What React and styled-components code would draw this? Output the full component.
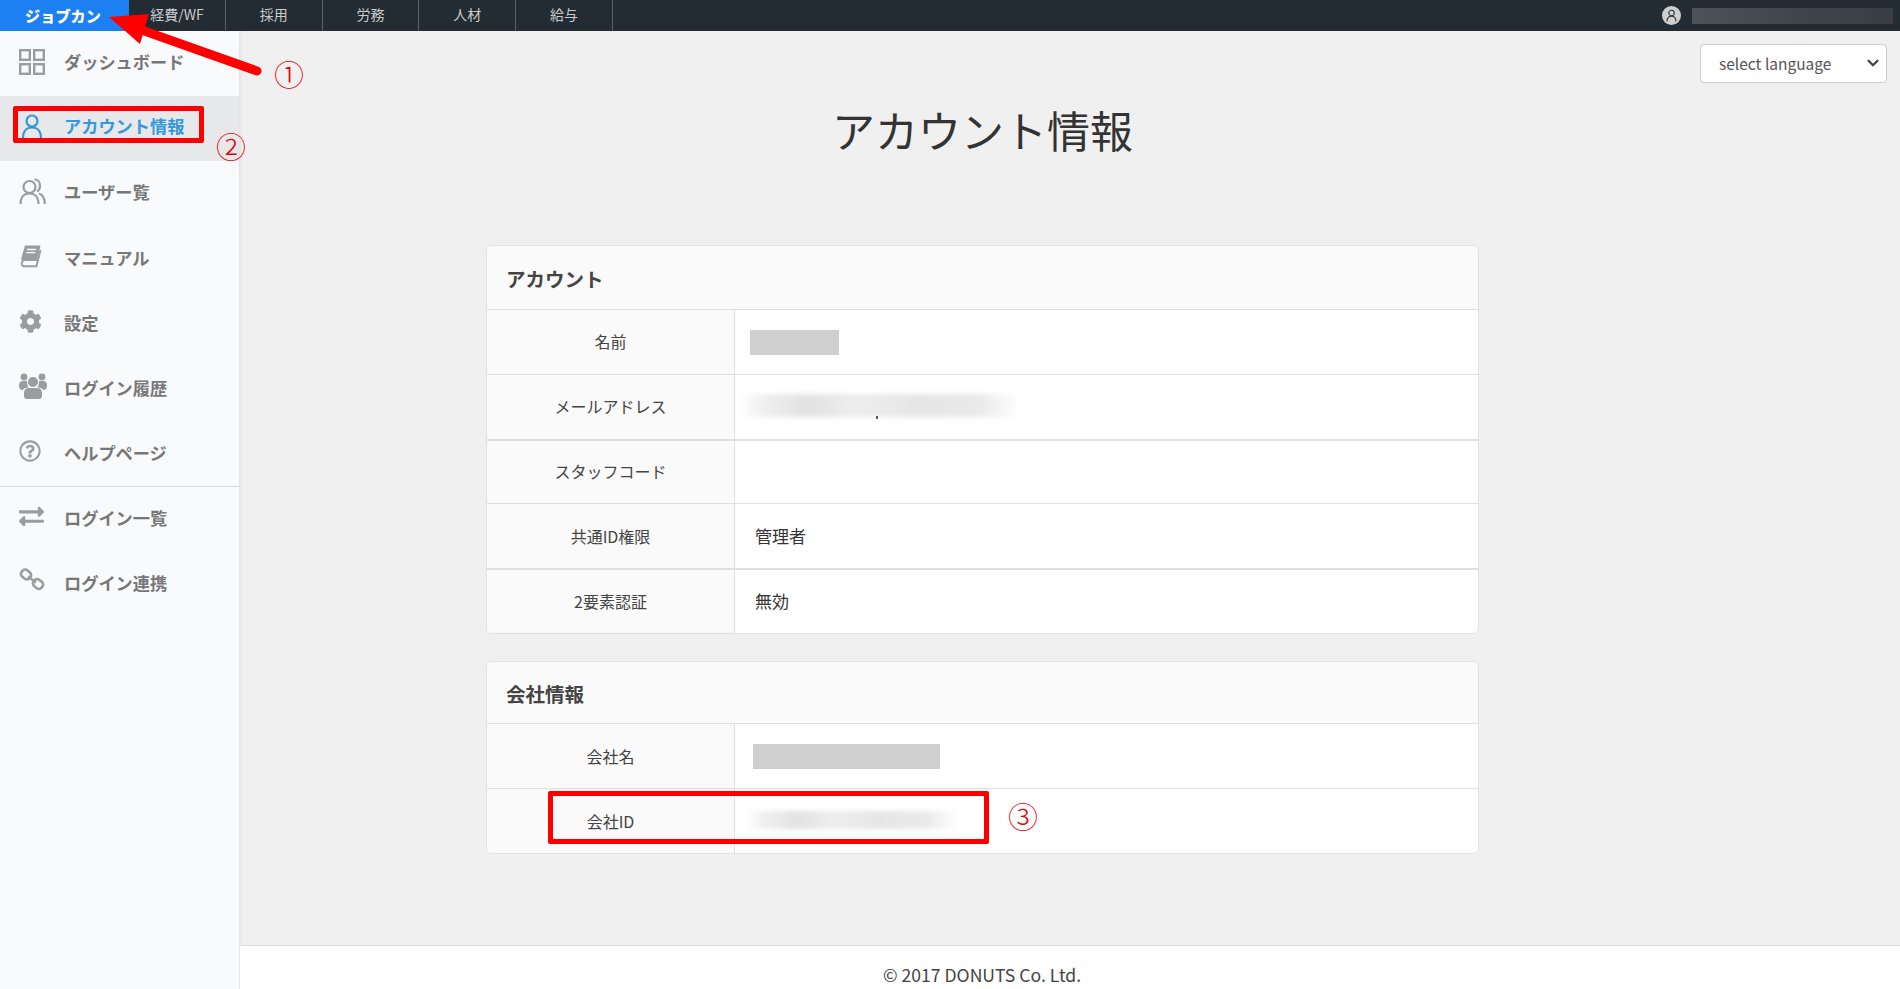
import styled, { createGlobalStyle } from "styled-components";
import { FaCog, FaRegQuestionCircle, FaExchangeAlt } from "react-icons/fa";
import { ChevronDown } from "lucide-react";

const GlobalStyle = createGlobalStyle`
  html, body, #root { margin: 0; padding: 0; height: 100%; }
  body {
    font-family: "Noto Sans CJK JP", "Noto Sans", sans-serif;
    color: #333;
    background: #f0f0f0;
    overflow: hidden;
  }
  * { box-sizing: border-box; }
`;

const Page = styled.div`
  position: relative;
  height: 989px;
  display: flex;
  flex-direction: column;
`;

const TopBar = styled.header`
  height: 31px;
  flex: none;
  display: flex;
  align-items: stretch;
  background: #232b33;
`;

const Brand = styled.div`
  width: 129px;
  display: flex;
  align-items: center;
  justify-content: center;
  padding: 0 3px 2px 0;
  background: #1c80f2;
  color: #fff;
  font-size: 15.2px;
  font-weight: 900;
`;

const TopNav = styled.nav`
  display: flex;
`;

const TopNavItem = styled.div`
  width: 96.8px;
  display: flex;
  align-items: center;
  justify-content: center;
  padding-bottom: 3px;
  border-right: 1px solid #59616a;
  color: #c9ccce;
  font-size: 14px;
`;

const UserArea = styled.div`
  margin-left: auto;
  display: flex;
  align-items: center;
  gap: 11px;
  padding-right: 7px;
`;

const Avatar = styled.div`
  width: 19px;
  height: 19px;
  border-radius: 50%;
  background: #cfcfcf;
  display: flex;
  align-items: center;
  justify-content: center;
  color: #333;
`;

const BlurredName = styled.div`
  width: 201px;
  height: 16px;
  background: linear-gradient(90deg, #4d5359 0%, #3f454b 55%, #383e44 100%);
`;

const Body = styled.div`
  flex: 1;
  display: flex;
  min-height: 0;
`;

const Sidebar = styled.aside`
  width: 240px;
  flex: none;
  background: #f9fafc;
  border-right: 1px solid #e4e4e6;
  box-shadow: 1px 0 3px rgba(0, 0, 0, 0.05);
`;

const MenuGroup = styled.div`
  border-top: ${(p) => (p.$divided ? "1px solid #d8d9dc" : "none")};
`;

const MenuItem = styled.div`
  height: 65px;
  display: flex;
  align-items: center;
  padding: 0 0 ${(p) => p.$pad ?? 4}px 19px;
  background: ${(p) => (p.$active ? "#e7e8ea" : "transparent")};
  color: ${(p) => (p.$active ? "#3498db" : "#777")};
  font-size: 17.2px;
  font-weight: 700;
`;

const MenuIcon = styled.span`
  width: 45px;
  flex: none;
  display: flex;
  align-items: center;
  margin-bottom: ${(p) => p.$lift ?? 0}px;
  color: ${(p) => (p.$active ? "#3498db" : "#9c9c9c")};
`;

const Main = styled.main`
  flex: 1;
  display: flex;
  flex-direction: column;
  min-width: 0;
`;

const LangRow = styled.div`
  display: flex;
  justify-content: flex-end;
  padding: 13px 13px 0 0;
`;

const LangWrap = styled.div`
  position: relative;
  width: 187px;
  height: 39px;

  svg {
    position: absolute;
    right: 5px;
    top: 10px;
    color: #444;
    pointer-events: none;
  }
`;

const LangSelect = styled.select`
  appearance: none;
  width: 100%;
  height: 100%;
  padding: 0 0 2px 18px;
  border: 1px solid #ccc;
  border-radius: 4px;
  background-color: #fff;
  color: #555;
  font-family: "Noto Sans CJK JP", sans-serif;
  font-size: 15.5px;
`;

const Content = styled.div`
  width: 993px;
  margin-left: 246px;
  display: flex;
  flex-direction: column;
  gap: 27px;
`;

const Title = styled.h1`
  margin: 0;
  height: 162px;
  padding-top: 15px;
  text-align: center;
  color: #333;
  font-size: 43px;
  font-weight: 400;
  line-height: 62px;
`;

const Card = styled.section`
  background: #fff;
  border: 1px solid #e2e2e2;
  border-radius: 6px;
  overflow: hidden;
`;

const CardHeader = styled.h2`
  margin: 0;
  height: ${(p) => p.$h}px;
  padding: 1px 0 0 19px;
  display: flex;
  align-items: center;
  background: #fafafa;
  color: #444;
  font-size: 19.5px;
  font-weight: 700;
`;

const Row = styled.div`
  height: 64.8px;
  display: grid;
  grid-template-columns: 248px 1fr;
  border-top: ${(p) => (p.$thick ? "2px" : "1px")} solid #e0e0e0;
`;

const RowLabel = styled.div`
  display: flex;
  align-items: center;
  justify-content: center;
  padding-bottom: 1px;
  background: #fafafa;
  border-right: 1px solid #e0e0e0;
  color: #444;
  font-size: 16px;
`;

const RowValue = styled.div`
  display: flex;
  align-items: center;
  padding-left: ${(p) => p.$indent ?? 20}px;
  padding-bottom: 2px;
  color: #333;
  font-size: 17px;
`;

const Redacted = styled.div`
  width: ${(p) => p.$w}px;
  height: 25px;
  margin-top: 3px;
  background: #cfcfcf;
`;

const BlurWrap = styled.div`
  position: relative;
`;

const BlurredValue = styled.div`
  width: ${(p) => p.$w}px;
  height: ${(p) => p.$h}px;
  background: linear-gradient(
    90deg,
    rgba(232, 232, 232, 0) 0%,
    #f0f0f0 8%,
    #e2e2e2 24%,
    #eeeeee 42%,
    #e6e6e6 62%,
    #e9e9e9 85%,
    rgba(232, 232, 232, 0) 100%
  );
  filter: blur(2.5px);
`;

const Descender = styled.span`
  position: absolute;
  left: 136px;
  bottom: -2px;
  width: 2px;
  height: 3px;
  background: #555;
`;

const Footer = styled.footer`
  margin-top: auto;
  height: 44px;
  flex: none;
  display: flex;
  align-items: center;
  background: #fff;
  border-top: 1px solid #dcdcdc;
  padding: 14px 0 0 246px;
  color: #444;
  font-size: 17.6px;
`;

const FooterText = styled.div`
  width: 992px;
  text-align: center;
`;

// annotations drawn over the screenshot
const RedFrame = styled.div`
  position: absolute;
  left: ${(p) => p.$x}px;
  top: ${(p) => p.$y}px;
  width: ${(p) => p.$w}px;
  height: ${(p) => p.$h}px;
  border: 5px solid #f00;
  border-radius: 2px;
`;

const Marker = styled.span`
  position: absolute;
  left: ${(p) => p.$x}px;
  top: ${(p) => p.$y}px;
  color: #e8000b;
  font-size: 30px;
  line-height: 30px;
  font-weight: 300;
`;

const ArrowSvg = styled.svg`
  position: absolute;
  left: 100px;
  top: 8px;
  width: 170px;
  height: 72px;
`;

const GridIcon = () => (
  <svg width="26" height="26" viewBox="0 0 26 26" fill="none" stroke="currentColor" strokeWidth="2.4">
    <rect x="1.2" y="1.2" width="9.6" height="9.6" />
    <rect x="15.2" y="1.2" width="9.6" height="9.6" />
    <rect x="1.2" y="15.2" width="9.6" height="9.6" />
    <rect x="15.2" y="15.2" width="9.6" height="9.6" />
  </svg>
);

const UserIcon = ({ size = 26 }) => (
  <svg width={size} height={size} viewBox="0 0 26 26" fill="none" stroke="currentColor" strokeWidth="2.200">
    <circle cx="13" cy="8" r="5.500" />
    <path d="M4 25c0-6.500 3.500-10.500 9-10.500S22 18.500 22 25" />
  </svg>
);

const UsersIcon = () => (
  <svg width="27" height="27" viewBox="0 0 27 27" fill="none" stroke="currentColor" strokeWidth="2.200">
    <circle cx="10.500" cy="9" r="6" />
    <path d="M1.500 26c0-6.500 3.500-10.500 9-10.500s9 4 9 10.500" />
    <path d="M15.500 1.500c3.500 0 5.500 3 5.500 6.500 0 2.500-1.200 4.500-3 5.500" />
    <path d="M20 15.500c3.800 1.200 5.800 5 5.800 10.500" />
  </svg>
);

const BookIcon = () => (
  <svg width="24" height="24" viewBox="0 0 24 24">
    <path d="M6 1.500h15.500L18 17H4.500Q1.800 17 2.300 14.200Z" fill="currentColor" />
    <path d="M4.500 17Q2.300 17.500 2.800 20.200Q3.300 22.300 5.500 22.300H17.500L21.500 6" fill="none" stroke="currentColor" strokeWidth="1.900" />
    <path d="M8 5.500h9M7.300 8.700h9" stroke="#f9fafc" strokeWidth="1.300" />
  </svg>
);

const GroupIcon = () => (
  <svg width="28" height="27" viewBox="0 0 28 27" fill="currentColor">
    <circle cx="5" cy="5" r="3.400" />
    <circle cx="23" cy="5" r="3.400" />
    <circle cx="14" cy="10" r="5" />
    <path d="M0 13.500Q0 9 4 9H8Q8 13 9.500 15.500Q5 15.500 3.800 18Q0 18 0 13.500Z" />
    <path d="M28 13.500Q28 9 24 9H20Q20 13 18.500 15.500Q23 15.500 24.200 18Q28 18 28 13.500Z" />
    <path d="M5 21Q5 16 10 16H18Q23 16 23 21V24Q23 27 20 27H8Q5 27 5 24Z" />
  </svg>
);

const ChainIcon = () => (
  <svg width="26" height="24" viewBox="0 0 26 24" fill="none" stroke="currentColor" strokeWidth="2.600">
    <rect x="2" y="2.500" width="10" height="8" rx="3.200" transform="rotate(40 7 6.500)" />
    <rect x="14" y="12" width="10" height="8" rx="3.200" transform="rotate(40 19 16)" />
    <path d="M9 8.500l8 6" />
  </svg>
);

const MENU = [
  { label: "ダッシュボード", icon: <GridIcon /> },
  { label: "アカウント情報", icon: <UserIcon />, active: true, pad: 6, lift: 0 },
  { label: "ユーザー覧", icon: <UsersIcon /> },
  { label: "マニュアル", icon: <BookIcon />, pad: 2, lift: 4 },
  { label: "設定", icon: <FaCog size={23} />, pad: 2, lift: 2 },
  { label: "ログイン履歴", icon: <GroupIcon />, pad: 2, lift: 4 },
  { label: "ヘルプページ", icon: <FaRegQuestionCircle size={22} />, pad: 2, lift: 4 },
];

const MENU_LOGIN = [
  { label: "ログイン一覧", icon: <FaExchangeAlt size={25} />, lift: 2 },
  { label: "ログイン連携", icon: <ChainIcon />, lift: 6 },
];

const TOP_NAV = ["経費/WF", "採用", "労務", "人材", "給与"];

const renderMenu = (items) =>
  items.map((item) => (
    <MenuItem key={item.label} $active={item.active} $pad={item.pad}>
      <MenuIcon $active={item.active} $lift={item.lift}>{item.icon}</MenuIcon>
      {item.label}
    </MenuItem>
  ));

export default function App() {
  return (
    <Page>
      <GlobalStyle />
      <TopBar>
        <Brand>ジョブカン</Brand>
        <TopNav>
          {TOP_NAV.map((name) => (
            <TopNavItem key={name}>{name}</TopNavItem>
          ))}
        </TopNav>
        <UserArea>
          <Avatar>
            <UserIcon size={13} />
          </Avatar>
          <BlurredName />
        </UserArea>
      </TopBar>

      <Body>
        <Sidebar>
          <MenuGroup>{renderMenu(MENU)}</MenuGroup>
          <MenuGroup $divided>{renderMenu(MENU_LOGIN)}</MenuGroup>
        </Sidebar>

        <Main>
          <LangRow>
            <LangWrap>
              <LangSelect defaultValue="">
                <option value="">select language</option>
              </LangSelect>
              <ChevronDown size={18} strokeWidth={3} />
            </LangWrap>
          </LangRow>
          <Content>
            <div>
              <Title>アカウント情報</Title>
              <Card>
                <CardHeader $h={63}>アカウント</CardHeader>
                <Row>
                  <RowLabel>名前</RowLabel>
                  <RowValue $indent={15}>
                    <Redacted $w={89} />
                  </RowValue>
                </Row>
                <Row>
                  <RowLabel>メールアドレス</RowLabel>
                  <RowValue $indent={5}>
                    <BlurWrap>
                      <BlurredValue $w={280} $h={23} />
                      <Descender />
                    </BlurWrap>
                  </RowValue>
                </Row>
                <Row $thick>
                  <RowLabel>スタッフコード</RowLabel>
                  <RowValue />
                </Row>
                <Row>
                  <RowLabel>共通ID権限</RowLabel>
                  <RowValue>管理者</RowValue>
                </Row>
                <Row $thick>
                  <RowLabel>2要素認証</RowLabel>
                  <RowValue>無効</RowValue>
                </Row>
              </Card>
            </div>
            <Card>
              <CardHeader $h={61.5}>会社情報</CardHeader>
              <Row>
                <RowLabel>会社名</RowLabel>
                <RowValue $indent={18}>
                  <Redacted $w={187} />
                </RowValue>
              </Row>
              <Row>
                <RowLabel>会社ID</RowLabel>
                <RowValue $indent={11}>
                  <BlurredValue $w={212} $h={18} />
                </RowValue>
              </Row>
            </Card>
          </Content>
          <Footer>
            <FooterText>© 2017 DONUTS Co. Ltd.</FooterText>
          </Footer>
        </Main>
      </Body>

      <ArrowSvg viewBox="0 0 170 72">
        <polygon points="9,9 49,6 40,36" fill="#f00" />
        <line x1="36" y1="20" x2="157" y2="63" stroke="#f00" strokeWidth="9" strokeLinecap="round" />
      </ArrowSvg>
      <RedFrame $x={13} $y={106} $w={191} $h={37} />
      <RedFrame $x={548} $y={791} $w={441} $h={53} />
      <Marker $x={274} $y={58}>①</Marker>
      <Marker $x={216} $y={130}>②</Marker>
      <Marker $x={1008} $y={800}>③</Marker>
    </Page>
  );
}
